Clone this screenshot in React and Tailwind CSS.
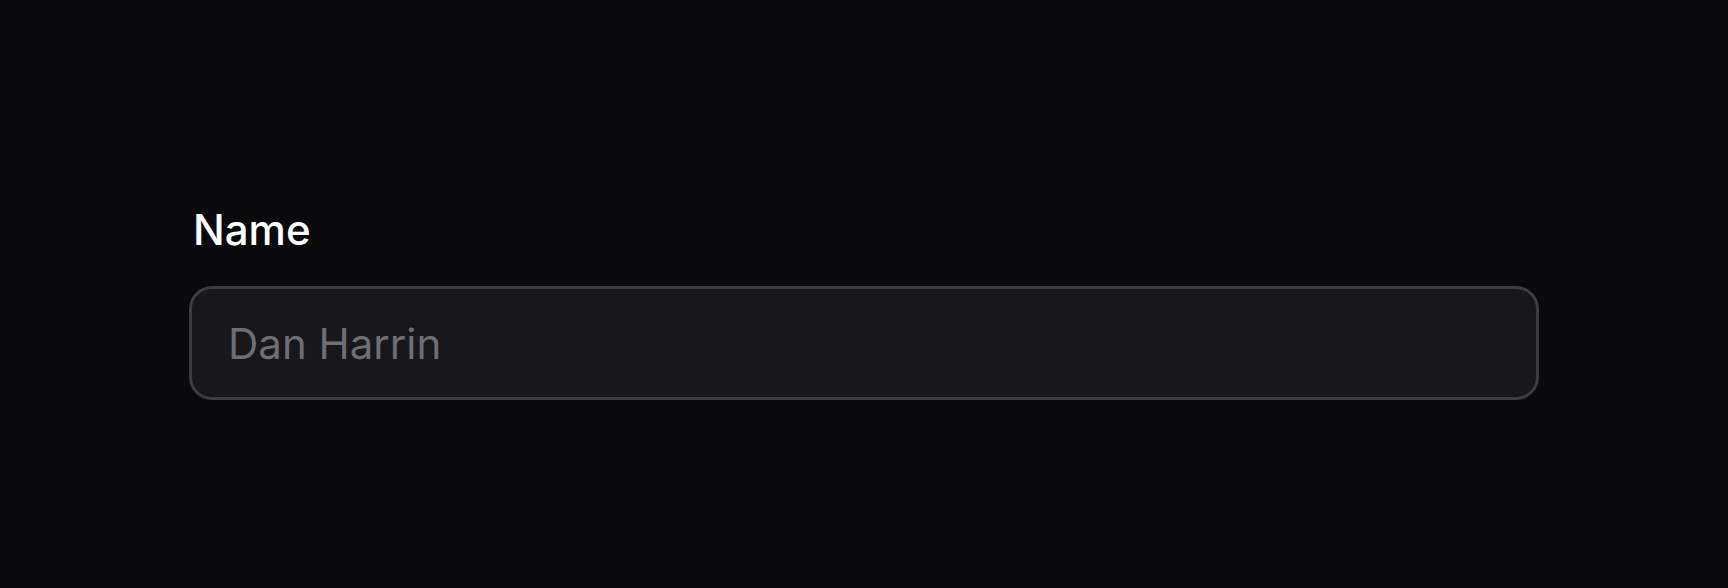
export default function App() {
  return (
    <div className="h-[588px] w-full bg-[#0a0a0c] px-[189px] pt-[198px] font-['Inter',sans-serif]">
      <div className="flex flex-col gap-[25px]">
        <label htmlFor="name" className="block pl-[4px] text-[42px] leading-[63px] font-medium text-white">
          Name
        </label>
        <input
          id="name"
          type="text"
          placeholder="Dan Harrin"
          className="h-[114px] w-full rounded-[23px] border-[3px] border-[#3d3d40] bg-[#18181a] px-[36px] text-[42px] text-white outline-none placeholder:text-[#6e6e75]"
        />
      </div>
    </div>
  );
}
